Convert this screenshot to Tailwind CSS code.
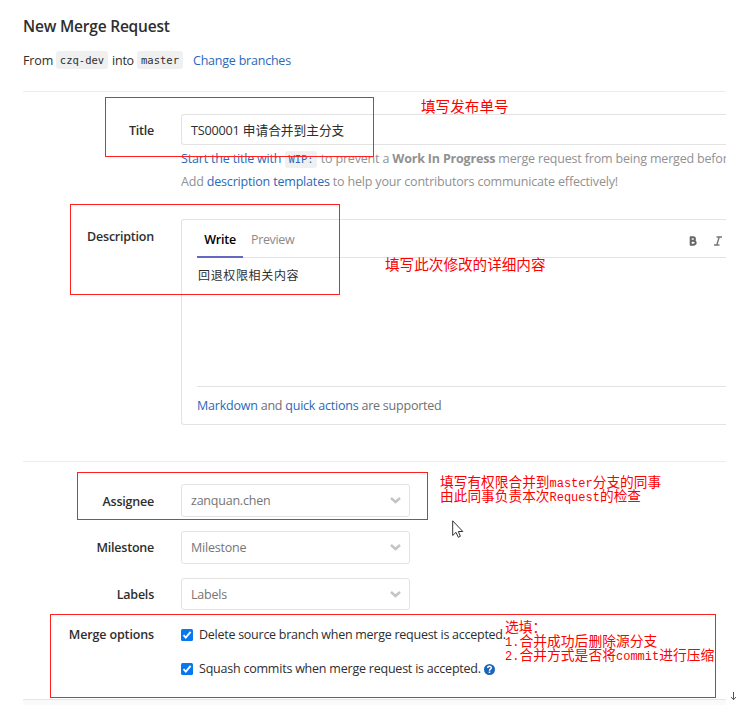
<!DOCTYPE html>
<html lang="zh-CN">
<head>
<meta charset="utf-8">
<title>New Merge Request</title>
<script src="https://cdn.jsdelivr.net/npm/@tailwindcss/browser@4"></script>
</head>
<body class="relative h-[705px] w-[737px] overflow-hidden bg-white font-['Open_Sans','Noto_Sans_CJK_SC',sans-serif] text-[12.5px] tracking-[-0.22px] text-[#2e2e2e]">
<main class="h-[705px] w-[726px] overflow-hidden whitespace-nowrap pl-[23px]">
  <h1 class="h-[48px] pt-[14px] text-[15.5px] leading-[24px] font-semibold tracking-[-0.2px]">New Merge Request</h1>
  <div class="flex h-[43px] items-start leading-[25px]">
    <span class="w-[33px] tracking-[-0.1px]">From</span>
    <code class="mt-[3px] h-[18px] w-[52px] rounded-[3px] bg-[#f0f0f0] text-center font-['DejaVu_Sans_Mono',monospace] text-[10.5px] leading-[19px] tracking-normal">czq-dev</code>
    <span class="ml-[4px] w-[25px]">into</span>
    <code class="mt-[3px] h-[18px] w-[46px] rounded-[3px] bg-[#f0f0f0] text-center font-['DejaVu_Sans_Mono',monospace] text-[10.5px] leading-[19px] tracking-normal">master</code>
    <a class="ml-[10px] text-[#2b68b8]">Change branches</a>
  </div>
  <section class="flex h-[370px] flex-col border-t border-[#ececec]">
    <div class="flex h-[127px] pt-[22px]">
      <label class="w-[131px] shrink-0 pt-[5px] text-right leading-[24px] font-semibold">Title</label>
      <div class="ml-[27px] w-[545px] shrink-0 overflow-hidden">
        <div class="h-[31px] rounded-l-[3px] border-y border-l border-[#e3e3e3] pl-[9px] text-[12.7px] leading-[31px] tracking-normal"><span class="tracking-[-0.25px]">TS00001</span> 申请合并到主分支</div>
        <p class="mt-[2px] leading-[24px] tracking-[-0.18px] text-[#919191]"><span class="text-[#2b68b8]">Start the title with <code class="mx-px inline-block h-[17px] rounded-[3px] bg-[#f0f0f0] px-[3px] font-['DejaVu_Sans_Mono',monospace] text-[10.5px] leading-[17px] tracking-normal">WIP:</code></span> to prevent a <b>Work In Progress</b> merge request from being merged before</p>
        <p class="leading-[22px] tracking-[-0.18px] text-[#919191]">Add <a class="text-[#2b68b8]">description templates</a> to help your contributors communicate effectively!</p>
      </div>
    </div>
    <div class="flex h-[206px]">
      <label class="w-[131px] shrink-0 pt-[6px] text-right leading-[24px] font-semibold">Description</label>
      <div class="ml-[27px] flex flex-1 flex-col rounded-l-[3px] border-y border-l border-[#e3e3e3] pl-[15px]">
        <div class="flex h-[38px] border-b border-[#e3e3e3] leading-[39px]">
          <span class="h-[38px] w-[46px] border-b-2 border-[#6666c4] text-center font-semibold text-black">Write</span>
          <span class="ml-[8px] tracking-[-0.35px] text-[#8a8a8a]">Preview</span>
          <span class="ml-auto flex items-center pr-[4px] pt-[5px]">
            <svg class="mr-[17px] h-[10px] w-[8px]" viewBox="0 0 8 10" fill="none" stroke="#666" stroke-width="2"><path d="M1 1.3H4.2C6.5 1.3 6.5 4.8 4.2 4.8H1M4 4.8C7.5 4.8 7.5 8.7 4.3 8.7H1M1.7 1V9"/></svg>
            <svg class="h-[10px] w-[8px]" viewBox="0 0 8 10" fill="none" stroke="#777" stroke-width="1.4"><path d="M2.5 1H8M0 9H5.5M5.2 1L2.8 9"/></svg>
          </span>
        </div>
        <div class="h-[129px] border-b border-[#e3e3e3] pt-[6px] pl-px text-[12px] leading-[24px] tracking-[0.65px]">回退权限相关内容</div>
        <p class="leading-[37px] text-[#707070]"><a class="text-[#2b68b8]">Markdown</a> and <a class="text-[#2b68b8]">quick actions</a> are supported</p>
      </div>
    </div>
  </section>
  <section class="flex h-[238px] flex-col border-t border-[#ececec] pt-[22px]">
    <div class="flex h-[47px] leading-[35px]">
      <label class="w-[131px] text-right font-semibold">Assignee</label>
      <div class="ml-[27px] flex h-[33px] w-[229px] items-center rounded-[3px] border border-[#e3e3e3] pr-[8px] pl-[9px] text-[#757575]">zanquan.chen<svg class="ml-auto h-[7px] w-[11px]" viewBox="0 0 11 7" fill="none" stroke="#c4c4c4" stroke-width="2.5"><path d="M1 1L5.5 5L10 1"/></svg></div>
    </div>
    <div class="flex h-[47px] leading-[34px]">
      <label class="w-[131px] text-right font-semibold">Milestone</label>
      <div class="ml-[27px] flex h-[33px] w-[229px] items-center rounded-[3px] border border-[#e3e3e3] pr-[8px] pl-[9px] text-[#757575]">Milestone<svg class="ml-auto h-[7px] w-[11px]" viewBox="0 0 11 7" fill="none" stroke="#c4c4c4" stroke-width="2.5"><path d="M1 1L5.5 5L10 1"/></svg></div>
    </div>
    <div class="flex h-[45px] leading-[33px]">
      <label class="w-[131px] text-right font-semibold">Labels</label>
      <div class="ml-[27px] flex h-[32px] w-[229px] items-center rounded-[3px] border border-[#e3e3e3] pr-[8px] pl-[9px] text-[#757575]">Labels<svg class="ml-auto h-[7px] w-[11px]" viewBox="0 0 11 7" fill="none" stroke="#c4c4c4" stroke-width="2.5"><path d="M1 1L5.5 5L10 1"/></svg></div>
    </div>
    <div class="flex leading-[24px]">
      <span class="w-[131px] text-right font-semibold tracking-[-0.14px]">Merge options</span>
      <div class="ml-[27px] flex flex-col gap-[10px]">
        <div class="flex items-center tracking-[-0.26px]"><svg class="mr-[6px] h-[12px] w-[12px]" viewBox="0 0 12 12"><rect width="12" height="12" rx="1.5" fill="#0878f0"/><path d="M2.5 6.2L4.8 8.6L9.6 2.9" fill="none" stroke="#fff" stroke-width="1.8"/></svg>Delete source branch when merge request is accepted.</div>
        <div class="flex items-center"><svg class="mr-[6px] h-[12px] w-[12px]" viewBox="0 0 12 12"><rect width="12" height="12" rx="1.5" fill="#0878f0"/><path d="M2.5 6.2L4.8 8.6L9.6 2.9" fill="none" stroke="#fff" stroke-width="1.8"/></svg>Squash commits when merge request is accepted.<svg class="ml-[3px] h-[11px] w-[11px]" viewBox="0 0 11 11"><circle cx="5.5" cy="5.5" r="5.5" fill="#1b64b8"/><path d="M3.7 4.1C3.7 1.7 7.4 1.8 7.3 4C7.2 5.2 5.5 5.2 5.5 6.7M5.5 7.6V9" fill="none" stroke="#fff" stroke-width="1.5"/></svg></div>
      </div>
    </div>
  </section>
  <div class="h-[6px] border-t border-[#e6e6e6] bg-[#fafafa]"></div>
</main>

<!-- annotations over the form -->
<div class="absolute top-[97px] left-[105px] h-[60px] w-[269px] border border-[#ff2020]"></div>
<div class="absolute top-[204px] left-[70px] h-[91px] w-[270px] border border-[#ff2020]"></div>
<div class="absolute top-[472px] left-[77px] h-[48px] w-[351px] border border-[#ff2020]"></div>
<div class="absolute top-[614px] left-[50px] h-[84px] w-[666px] border border-[#ff2020]"></div>
<div class="absolute top-[97px] left-[421px] text-[14.6px] leading-[18px] tracking-normal whitespace-nowrap text-[#ff0000]">填写发布单号</div>
<div class="absolute top-[255px] left-[385px] text-[14.6px] leading-[18px] tracking-normal whitespace-nowrap text-[#ff0000]">填写此次修改的详细内容</div>
<div class="absolute top-[477px] left-[440px] font-['Liberation_Mono','Noto_Sans_CJK_SC',monospace] text-[13.7px] leading-[14px] tracking-normal whitespace-nowrap text-[#ff0000]">填写有权限合并到<span class="text-[12px]">master</span>分支的同事<br>由此同事负责本次<span class="text-[12px]">Request</span>的检查</div>
<div class="absolute top-[622px] left-[505px] font-['Liberation_Mono','Noto_Sans_CJK_SC',monospace] text-[13.8px] leading-[14px] tracking-normal whitespace-nowrap text-[#ff0000]">选填：<br><span class="text-[12px]">1.</span>合并成功后删除源分支<br><span class="text-[12px]">2.</span>合并方式是否将<span class="text-[12px]">commit</span>进行压缩</div>
<svg class="absolute top-[520px] left-[452px] h-[19px] w-[12px]" viewBox="0 0 12 19" fill="#fff" stroke="#333" stroke-width="1"><path d="M.7 .8V15.5L4 12.3L6.3 17.3L8.4 16.3L6.3 11.5H10.8Z"/></svg>
<svg class="absolute top-[691px] left-[730px] h-[10px] w-[7px]" viewBox="0 0 7 10" fill="none" stroke="#555"><path d="M3.5 1V9M1 6L3.5 8.7L6 6"/></svg>
</body>
</html>
